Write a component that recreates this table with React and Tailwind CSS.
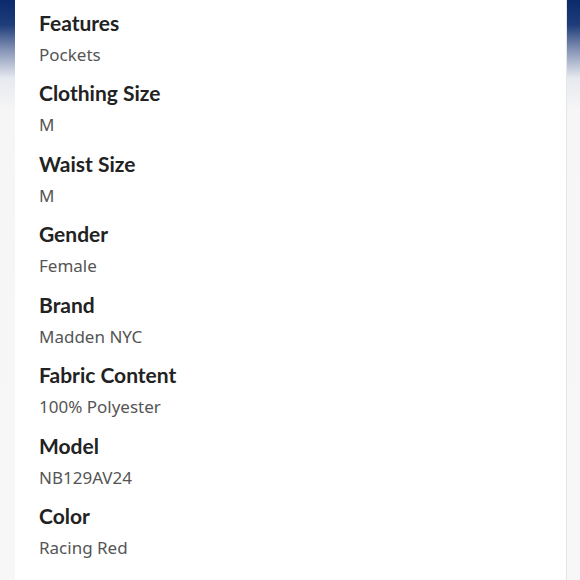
import React from 'react'

const specs = [
  ['Features', 'Pockets'],
  ['Clothing Size', 'M'],
  ['Waist Size', 'M'],
  ['Gender', 'Female'],
  ['Brand', 'Madden NYC'],
  ['Fabric Content', '100% Polyester'],
  ['Model', 'NB129AV24'],
  ['Color', 'Racing Red'],
]

function App() {
  return (
    <div className="w-[580px] h-[580px] overflow-hidden flex bg-[linear-gradient(to_bottom,#0b2a6c_0px,#1f3d7a_25px,#8594b6_50px,#e6e9f0_78px,#f6f6f6_110px,#f7f7f7_580px)]">
      <div className="w-[15px] shrink-0" />
      <div className="flex-1 bg-white border-r border-[#e6e6e6] pt-[8px] pl-[24px]">
        {specs.map(([label, value]) => (
          <div key={label} className="h-[70.43px]">
            <div className="h-[30px] leading-[30px] text-[21px] font-bold text-[#222] font-['Lato',sans-serif]">{label}</div>
            <div className="mt-[2px] h-[30px] leading-[30px] text-[17px] text-[#555] font-['Noto_Sans',sans-serif]">{value}</div>
          </div>
        ))}
      </div>
      <div className="w-[13px] shrink-0" />
    </div>
  )
}

export default App
